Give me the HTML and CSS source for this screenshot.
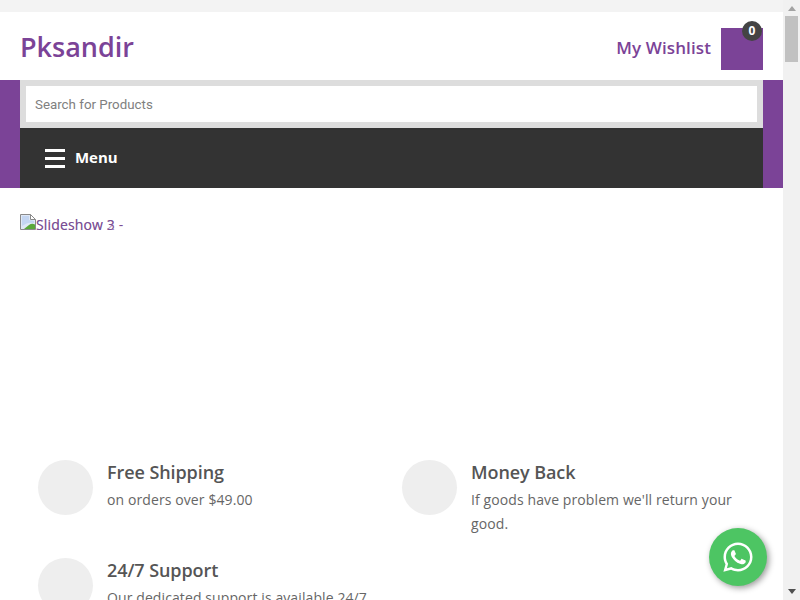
FILE: index.html
```html
<!DOCTYPE html>
<html lang="en">
<head>
<meta charset="utf-8">
<title>Pksandir</title>
<link rel="stylesheet" href="styles.css">
</head>
<body>
<div class="viewport">
  <main class="page">
    <div class="topstrip"></div>
    <header class="header">
      <a class="logo">Pksandir</a>
      <div class="header-actions">
        <a class="wishlist">My Wishlist</a>
        <div class="cart"><span class="cart-count">0</span></div>
      </div>
    </header>
    <div class="band">
      <div class="band-inner">
        <div class="search"><div class="search-input">Search for Products</div></div>
        <nav class="menu">
          <span class="burger"><i></i><i></i><i></i></span>
          <span class="menu-label">Menu</span>
        </nav>
      </div>
    </div>
    <section class="slideshow">
      <div class="slide">
        <svg class="broken" viewBox="0 0 16 16" width="16" height="16">
          <path d="M.5.500h10l5 5v10H.5z" fill="#dfe8f6" stroke="#8a8a8a"/>
          <path d="M10.500.500v5h5z" fill="#fff" stroke="#8a8a8a"/>
          <path d="M2 2h7v4l5 1v2c-4-1-8 0-12 3z" fill="#c4d6f2"/>
          <path d="M4 15l5-4c2-1.500 4-1.500 6-.5V15z" fill="#5aa83a"/>
        </svg><span class="alt">Slideshow 3 -</span>
        <span class="alt alt-over">Slideshow 2</span>
      </div>
    </section>
    <section class="features">
      <div class="feature">
        <div class="circle"></div>
        <div><h3>Free Shipping</h3><p>on orders over $49.00</p></div>
      </div>
      <div class="feature">
        <div class="circle"></div>
        <div><h3>Money Back</h3><p>If goods have problem we'll return your good.</p></div>
      </div>
      <div class="feature">
        <div class="circle"></div>
        <div><h3>24/7 Support</h3><p>Our dedicated support is available 24/7</p></div>
      </div>
    </section>
    <a class="whatsapp">
      <svg viewBox="0 0 32 32" width="32" height="32">
        <path fill="#fff" fill-rule="evenodd" d="M16 1.500C8 1.500 1.500 8 1.500 16c0 2.600.7 5.100 2 7.300L1.400 30.800l7.700-2c2.100 1.100 4.500 1.700 6.900 1.700 8 0 14.500-6.500 14.500-14.500S24 1.500 16 1.500zm0 26.500c-2.200 0-4.300-.6-6.200-1.700l-.4-.3-4.500 1.200 1.200-4.400-.3-.5C4.600 20.400 4 18.200 4 16 4 9.400 9.400 4 16 4s12 5.400 12 12-5.400 12-12 12z"/>
        <path fill="#fff" d="M22.600 19.100c-.4-.2-2.100-1-2.400-1.200-.3-.1-.6-.2-.8.200-.2.400-.9 1.200-1.100 1.400-.2.200-.4.300-.8.100-.4-.2-1.500-.6-2.900-1.800-1.100-1-1.800-2.100-2-2.500-.2-.4 0-.6.200-.8l.6-.7c.2-.2.200-.4.400-.6.100-.2.100-.5 0-.6-.1-.2-.8-2-1.100-2.700-.3-.7-.6-.6-.8-.6h-.7c-.2 0-.6.100-1 .5-.3.400-1.300 1.300-1.300 3.100s1.300 3.600 1.500 3.800c.2.200 2.600 4 6.300 5.600.9.400 1.600.6 2.100.8.900.3 1.700.2 2.300.1.700-.1 2.100-.9 2.400-1.700.3-.8.300-1.600.2-1.700-.1-.2-.3-.3-.7-.5z"/>
      </svg>
    </a>
  </main>
  <aside class="scrollbar">
    <span class="arrow-up"></span>
    <span class="thumb"></span>
    <span class="arrow-down"></span>
  </aside>
</div>
</body>
</html>
```
FILE: styles.css
```css
* { box-sizing: border-box; }
html, body { margin: 0; height: 100%; overflow: hidden; }
body { font-family: "Open Sans", sans-serif; color: #555; background: #fff; }
.viewport { display: flex; width: 800px; height: 600px; }
.page { position: relative; width: 783px; height: 600px; overflow: hidden; background: #fff; }
.topstrip { height: 12px; background: #f3f3f3; }
.header { height: 68px; padding: 0 20px; display: flex; justify-content: space-between; align-items: flex-start; }
.logo { color: #7b4397; font-size: 27px; font-weight: 600; line-height: 36px; margin-top: 17px; }
.header-actions { display: flex; gap: 10px; height: 42px; margin-top: 16px; }
.wishlist { color: #7b4397; font-size: 17px; font-weight: 600; letter-spacing: .1px; line-height: 24px; margin-top: 8px; }
.cart { position: relative; width: 42px; height: 42px; background: #7b4397; }
.cart-count { position: absolute; top: -7px; right: 1px; width: 20px; height: 20px; border-radius: 50%; background: #444; color: #fff; font-size: 12px; font-weight: 700; line-height: 19px; text-align: center; }
.band { background: #7b4397; padding: 0 20px; height: 108px; }
.search { height: 48px; background: #ddd; padding: 6px; }
.search-input { height: 36px; background: #fff; font-family: Roboto, sans-serif; font-size: 13.33px; line-height: 37px; color: #808080; padding-left: 9px; }
.menu { height: 60px; background: #333; display: flex; align-items: center; padding-left: 25px; gap: 10px; }
.burger { display: flex; flex-direction: column; gap: 5px; width: 20px; }
.burger i { display: block; height: 3px; background: #fff; }
.menu-label { color: #fff; font-size: 15px; font-weight: 700; letter-spacing: -.05px; line-height: 20px; margin-top: -2px; }
.slideshow { height: 272px; padding: 25px 20px 0; }
.slide { position: relative; height: 20px; font-size: 14px; letter-spacing: .15px; line-height: 24px; color: #7b4f95; }
.broken { vertical-align: 0; }
.alt-over { position: absolute; left: 16px; top: 0; opacity: .6; }
.features { display: grid; grid-template-columns: 364px 364px; padding: 0 0 0 38px; }
.feature { display: flex; gap: 14px; align-items: flex-start; height: 98px; }
.circle { flex: none; width: 55px; height: 55px; border-radius: 50%; background: #eee; }
.feature h3 { margin: -1px 0 0; font-size: 18px; font-weight: 600; letter-spacing: -.08px; line-height: 26px; color: #555; }
.feature p { margin: 3px 0 0; font-size: 14px; letter-spacing: .1px; line-height: 24px; color: #666; width: 275px; }
.whatsapp { position: absolute; left: 709px; top: 528px; width: 58px; height: 58px; border-radius: 50%; background: #4dc563; box-shadow: 2px 2px 6px rgba(0,0,0,.4); display: flex; align-items: center; justify-content: center; }
.scrollbar { position: relative; width: 17px; height: 600px; background: #f1f1f1; display: flex; flex-direction: column; align-items: center; }
.thumb { width: 13px; height: 46px; background: #c1c1c1; margin-top: 5px; }
.arrow-up { margin-top: 6px; width: 0; height: 0; border-left: 4px solid transparent; border-right: 4px solid transparent; border-bottom: 5px solid #a3a3a3; }
.arrow-down { margin-top: auto; margin-bottom: 6px; width: 0; height: 0; border-left: 4px solid transparent; border-right: 4px solid transparent; border-top: 5px solid #505050; }
```
